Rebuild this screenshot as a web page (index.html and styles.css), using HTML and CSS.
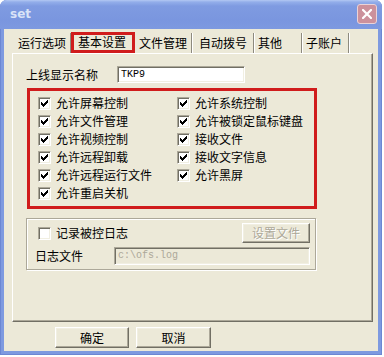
FILE: index.html
```html
<!DOCTYPE html>
<html>
<head>
<meta charset="utf-8">
<link rel="stylesheet" href="styles.css">
</head>
<body>
<div class="screen">
  <div class="window">
    <div class="titlebar">
      <span class="title">set</span>
      <span class="close"><svg width="10" height="10" viewBox="0 0 10 10"><path d="M1 1L9 9M9 1L1 9" stroke="#fff" stroke-width="2.2" stroke-linecap="square"/></svg></span>
    </div>
    <div class="client">
      <div class="tabs">
        <div class="tab">运行选项</div>
        <div class="tab active">基本设置</div>
        <div class="tab">文件管理</div>
        <div class="tab wide">自动拨号</div>
        <div class="tab">其他</div>
        <div class="tab">子账户</div>
      </div>
      <div class="panel">
        <div class="namerow">
          <span class="namelabel">上线显示名称</span>
          <span class="textbox">TKP9</span>
        </div>
        <div class="perms">
          <div class="col left">
            <div class="cbrow"><span class="cb"><svg width="7" height="7" viewBox="0 0 7 7" shape-rendering="crispEdges"><path d="M0 2h1v3H0zM1 3h1v3H1zM2 4h1v3H2zM3 3h1v3H3zM4 2h1v3H4zM5 1h1v3H5zM6 0h1v3H6z"/></svg></span><span>允许屏幕控制</span></div>
            <div class="cbrow"><span class="cb"><svg width="7" height="7" viewBox="0 0 7 7" shape-rendering="crispEdges"><path d="M0 2h1v3H0zM1 3h1v3H1zM2 4h1v3H2zM3 3h1v3H3zM4 2h1v3H4zM5 1h1v3H5zM6 0h1v3H6z"/></svg></span><span>允许文件管理</span></div>
            <div class="cbrow"><span class="cb"><svg width="7" height="7" viewBox="0 0 7 7" shape-rendering="crispEdges"><path d="M0 2h1v3H0zM1 3h1v3H1zM2 4h1v3H2zM3 3h1v3H3zM4 2h1v3H4zM5 1h1v3H5zM6 0h1v3H6z"/></svg></span><span>允许视频控制</span></div>
            <div class="cbrow"><span class="cb"><svg width="7" height="7" viewBox="0 0 7 7" shape-rendering="crispEdges"><path d="M0 2h1v3H0zM1 3h1v3H1zM2 4h1v3H2zM3 3h1v3H3zM4 2h1v3H4zM5 1h1v3H5zM6 0h1v3H6z"/></svg></span><span>允许远程卸载</span></div>
            <div class="cbrow"><span class="cb"><svg width="7" height="7" viewBox="0 0 7 7" shape-rendering="crispEdges"><path d="M0 2h1v3H0zM1 3h1v3H1zM2 4h1v3H2zM3 3h1v3H3zM4 2h1v3H4zM5 1h1v3H5zM6 0h1v3H6z"/></svg></span><span>允许远程运行文件</span></div>
            <div class="cbrow"><span class="cb"><svg width="7" height="7" viewBox="0 0 7 7" shape-rendering="crispEdges"><path d="M0 2h1v3H0zM1 3h1v3H1zM2 4h1v3H2zM3 3h1v3H3zM4 2h1v3H4zM5 1h1v3H5zM6 0h1v3H6z"/></svg></span><span>允许重启关机</span></div>
          </div>
          <div class="col right">
            <div class="cbrow"><span class="cb"><svg width="7" height="7" viewBox="0 0 7 7" shape-rendering="crispEdges"><path d="M0 2h1v3H0zM1 3h1v3H1zM2 4h1v3H2zM3 3h1v3H3zM4 2h1v3H4zM5 1h1v3H5zM6 0h1v3H6z"/></svg></span><span>允许系统控制</span></div>
            <div class="cbrow"><span class="cb"><svg width="7" height="7" viewBox="0 0 7 7" shape-rendering="crispEdges"><path d="M0 2h1v3H0zM1 3h1v3H1zM2 4h1v3H2zM3 3h1v3H3zM4 2h1v3H4zM5 1h1v3H5zM6 0h1v3H6z"/></svg></span><span>允许被锁定鼠标键盘</span></div>
            <div class="cbrow"><span class="cb"><svg width="7" height="7" viewBox="0 0 7 7" shape-rendering="crispEdges"><path d="M0 2h1v3H0zM1 3h1v3H1zM2 4h1v3H2zM3 3h1v3H3zM4 2h1v3H4zM5 1h1v3H5zM6 0h1v3H6z"/></svg></span><span>接收文件</span></div>
            <div class="cbrow"><span class="cb"><svg width="7" height="7" viewBox="0 0 7 7" shape-rendering="crispEdges"><path d="M0 2h1v3H0zM1 3h1v3H1zM2 4h1v3H2zM3 3h1v3H3zM4 2h1v3H4zM5 1h1v3H5zM6 0h1v3H6z"/></svg></span><span>接收文字信息</span></div>
            <div class="cbrow"><span class="cb"><svg width="7" height="7" viewBox="0 0 7 7" shape-rendering="crispEdges"><path d="M0 2h1v3H0zM1 3h1v3H1zM2 4h1v3H2zM3 3h1v3H3zM4 2h1v3H4zM5 1h1v3H5zM6 0h1v3H6z"/></svg></span><span>允许黑屏</span></div>
          </div>
        </div>
        <div class="group">
          <div class="grow1">
            <span class="cb empty"></span><span>记录被控日志</span>
            <span class="btn disabled">设置文件</span>
          </div>
          <div class="grow2">
            <span class="loglabel">日志文件</span>
            <span class="textbox off">c:\ofs.log</span>
          </div>
        </div>
      </div>
      <div class="buttons">
        <span class="btn ok">确定</span>
        <span class="btn cancel">取消</span>
      </div>
    </div>
  </div>
</div>
</body>
</html>
```
FILE: styles.css
```css
* { box-sizing: border-box; }
html, body { margin: 0; padding: 0; }
body {
  width: 384px;
  height: 357px;
  overflow: hidden;
  background: #ffffff;
  font-family: "Noto Sans CJK SC", sans-serif;
  font-size: 12px;
  color: #000;
}
.screen { display: flex; }
.window {
  width: 382px;
  height: 355px;
  display: flex;
  flex-direction: column;
  background: #7e9ae0;
  border-radius: 7px 7px 0 0;
  box-shadow: inset 1px 0 #6c87d3, inset -1px 0 #6c87d3, inset 0 -1px #6c87d3;
}
.titlebar {
  height: 29px;
  display: flex;
  align-items: center;
  justify-content: space-between;
  padding: 0 5px 0 10px;
  border-radius: 7px 7px 0 0;
  background: linear-gradient(to bottom, #b3c8f3 0px, #93aeea 2px, #7f9be1 6px, #7a96df 20px, #7d99e0 29px);
}
.title {
  font-family: "DejaVu Sans", sans-serif;
  font-weight: bold;
  font-size: 12px;
  color: #d9e3f7;
  margin-top: -1px;
}
.close {
  width: 20px;
  height: 20px;
  margin-top: -1px;
  border: 1px solid #ead3d8;
  border-radius: 3px;
  background: #cc919c;
  display: flex;
  align-items: center;
  justify-content: center;
}
.client {
  flex: 1;
  margin: 0 4px 4px;
  background: #ece9d8;
  padding: 4px 0 0 8px;
  display: flex;
  flex-direction: column;
}
.tabs {
  display: grid;
  grid-template-columns: 57px 64px 57px 62px 48px 47px;
  height: 20px;
  margin-left: 2px;
}
.tab {
  display: flex;
  align-items: center;
  padding: 0 0 1px 4px;
  line-height: 1;
  border-right: 1px solid #8d8a7e;
  box-shadow: 1px 0 #ffffff;
}
.tab.wide { padding-left: 7px; }
.tab.active {
  border: 3px solid #d01c1c;
  padding-left: 4px;
  box-shadow: none;
  margin-top: -1px;
}
.panel {
  width: 361px;
  height: 269px;
  border: 1px solid;
  border-color: #ffffff #716f64 #716f64 #ffffff;
  box-shadow: inset -1px -1px #aca899;
  padding: 12px 0 0 13px;
  display: flex;
  flex-direction: column;
}
.namerow {
  display: flex;
  align-items: center;
  height: 17px;
}
.namelabel { width: 91px; line-height: 1; }
.textbox {
  width: 128px;
  height: 17px;
  background: #fff;
  border: 1px solid;
  border-color: #aca899 #ffffff #ffffff #aca899;
  box-shadow: inset 1px 1px #716f64, inset -1px -1px #f1efe2;
  font-family: "Liberation Mono", monospace;
  font-size: 10px;
  line-height: 15px;
  padding-left: 3px;
}
.perms {
  margin: 5px 0 0 1px;
  width: 290px;
  height: 121px;
  border: 3px solid #d01c1c;
  padding: 3px 0 0 8px;
  display: flex;
}
.col.left { width: 139px; }
.cbrow {
  height: 18px;
  display: flex;
  align-items: center;
  gap: 5px;
  line-height: 1;
}
.cb {
  width: 13px;
  height: 13px;
  flex: none;
  background: #fff;
  border: 1px solid;
  border-color: #aca899 #ffffff #ffffff #aca899;
  box-shadow: inset 1px 1px #716f64, inset -1px -1px #f1efe2;
  display: flex;
  align-items: center;
  justify-content: center;
}
.cb svg { display: block; fill: #000; }
.group {
  margin-top: 9px;
  width: 290px;
  height: 52px;
  border: 1px solid #aca899;
  box-shadow: inset 1px 1px #ffffff, 1px 1px #ffffff;
  display: flex;
  flex-direction: column;
}
.grow1 {
  display: flex;
  align-items: center;
  height: 20px;
  margin-top: 4px;
  gap: 5px;
  line-height: 1;
}
.grow1 .cb { margin-left: 11px; }
.grow1 .btn { margin-left: auto; margin-right: 5px; width: 68px; height: 20px; }
.grow2 {
  display: flex;
  align-items: center;
  height: 18px;
  margin-top: 4px;
  line-height: 1;
}
.loglabel { margin-left: 8px; width: 79px; }
.textbox.off {
  width: 196px;
  height: 18px;
  background: #ece9d8;
  color: #aca899;
  line-height: 16px;
}
.btn {
  display: flex;
  align-items: center;
  justify-content: center;
  line-height: 1;
  background: #ece9d8;
  border: 1px solid;
  border-color: #ffffff #716f64 #716f64 #ffffff;
  box-shadow: inset -1px -1px #aca899, inset 1px 1px #f1efe2;
}
.btn.disabled { color: #aca899; text-shadow: 1px 1px #ffffff; }
.buttons {
  display: flex;
  gap: 7px;
  margin: 5px 0 0 43px;
}
.btn.ok { width: 74px; height: 21px; }
.btn.cancel { width: 75px; height: 21px; }
```
